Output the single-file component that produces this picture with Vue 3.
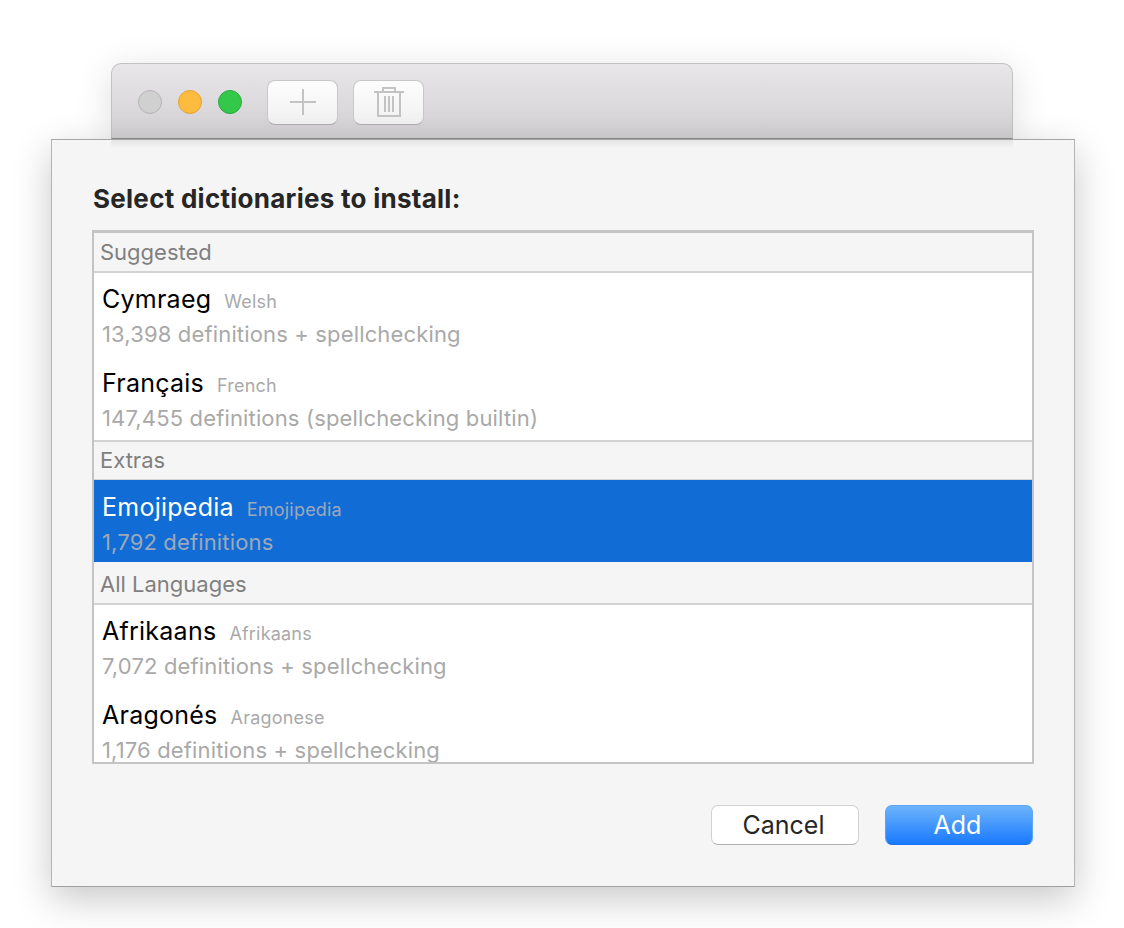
<script setup>
const groups = [
  { title: 'Suggested', kind: 'firstgroup', items: [
    { name: 'Cymraeg', en: 'Welsh', info: '13,398 definitions + spellchecking' },
    { name: 'Français', en: 'French', info: '147,455 definitions (spellchecking builtin)' },
  ]},
  { title: 'Extras', kind: 'midgroup', items: [
    { name: 'Emojipedia', en: 'Emojipedia', info: '1,792 definitions', selected: true },
  ]},
  { title: 'All Languages', kind: 'lastgroup', items: [
    { name: 'Afrikaans', en: 'Afrikaans', info: '7,072 definitions + spellchecking' },
    { name: 'Aragonés', en: 'Aragonese', info: '1,176 definitions + spellchecking' },
  ]},
]
</script>

<template>
  <div class="stage">
    <div class="back">
      <span class="light grey"></span>
      <span class="light yellow"></span>
      <span class="light green"></span>
      <button class="tool first" aria-label="Add">
        <svg width="26" height="26" viewBox="0 0 26 26"><path d="M0 13H26M13 0V26" stroke="#c4c3c4" stroke-width="2" fill="none"/></svg>
      </button>
      <button class="tool" aria-label="Delete">
        <svg width="30" height="30" viewBox="0 0 30 30" fill="none" stroke="#c4c3c4" stroke-width="2"><path d="M0 5H30M9 5V1H21V5M4 5V29H26V5"/><path d="M11 9V25M15 9V25M19 9V25"/></svg>
      </button>
    </div>
    <div class="sheet">
      <h1 class="heading">Select dictionaries to install:</h1>
      <div class="list">
        <section v-for="g in groups" :key="g.title">
          <div class="group" :class="g.kind">{{ g.title }}</div>
          <div v-for="it in g.items" :key="it.name" class="row" :class="{ selected: it.selected }">
            <div class="line"><span class="name">{{ it.name }}</span><span class="en">{{ it.en }}</span></div>
            <div class="info">{{ it.info }}</div>
          </div>
        </section>
      </div>
      <div class="actions">
        <button class="btn cancel">Cancel</button>
        <button class="btn add">Add</button>
      </div>
    </div>
  </div>
</template>

<style>
html, body { background: #fff; margin: 0; }
</style>

<style scoped>
.stage {
  width: 1124px;
  height: 928px;
  box-sizing: border-box;
  padding: 63px 49px 0 51px;
  font-family: Inter, "Noto Sans", sans-serif;
  overflow: hidden;
  background: #fff;
}
.back {
  width: 902px;
  height: 76px;
  margin-left: 60px;
  box-sizing: border-box;
  border: 1px solid #c3c2c3;
  border-bottom: 1px solid #8f8e8f;
  border-radius: 10px 10px 0 0;
  background: linear-gradient(#e8e6e8, #d2d0d3);
  box-shadow: 0 6px 36px rgba(0,0,0,.13);
  display: flex;
  align-items: center;
  padding: 2px 0 0 26px;
}
.light {
  width: 24px;
  height: 24px;
  box-sizing: border-box;
  border-radius: 50%;
  margin-right: 16px;
  border: 1px solid;
}
.grey { background: #d0d0d0; border-color: #b5b5b5; }
.yellow { background: #fdbc40; border-color: #e3a32f; }
.green { background: #34c84a; border-color: #2aaa3c; }
.tool {
  width: 71px;
  height: 45px;
  padding: 0;
  margin: 0 15px 0 0;
  box-sizing: border-box;
  border: 1px solid #c9c8c9;
  border-bottom-color: #b0afb0;
  border-radius: 8px;
  background: linear-gradient(#fdfdfd, #f1f1f1);
  display: flex;
  align-items: center;
  justify-content: center;
}
.tool.first { margin-left: 9px; }
.sheet {
  position: relative;
  width: 1024px;
  height: 748px;
  box-sizing: border-box;
  background: #f5f5f5;
  border: 1px solid #b4b4b4;
  border-top-color: #a5a5a5;
  border-bottom-color: #a0a0a0;
  box-shadow: 0 12px 36px rgba(0,0,0,.22);
  padding: 0 40px;
}
.sheet::before {
  content: "";
  position: absolute;
  top: 0;
  left: 59px;
  right: 61px;
  height: 8px;
  background: linear-gradient(rgba(0,0,0,.07), rgba(0,0,0,0));
}
.heading {
  margin: 0;
  padding-left: 1px;
  height: 90px;
  box-sizing: border-box;
  padding-top: 44px;
  font-size: 26px;
  letter-spacing: .27px;
  line-height: 30px;
  font-weight: 700;
  color: #262626;
}
.list {
  height: 534px;
  box-sizing: border-box;
  border: 2px solid #c4c4c4;
  border-top-width: 3px;
  background: #fff;
  overflow: hidden;
}
.group {
  box-sizing: border-box;
  padding-left: 6px;
  background: #f5f5f5;
  border-bottom: 2px solid #d2d2d2;
  font-size: 22px;
  color: #808080;
}
.firstgroup { height: 40px; line-height: 39px; }
.midgroup {
  height: 40px;
  margin-top: -1px;
  line-height: 37px;
  border-top: 2px solid #d2d2d2;
  border-bottom-width: 1px;
}
.lastgroup { height: 43px; line-height: 44px; }
.row {
  height: 84px;
  box-sizing: border-box;
  padding: 9px 8px 0 8px;
}
.line {
  display: flex;
  align-items: baseline;
  height: 38px;
  line-height: 34px;
}
.name {
  font-size: 25px;
  letter-spacing: .25px;
  color: #000;
  margin-right: 13px;
}
.en {
  font-size: 18px;
  letter-spacing: .2px;
  color: #a9a9a9;
}
.info {
  font-size: 22px;
  letter-spacing: .15px;
  line-height: 28px;
  color: #a9a9a9;
}
.selected {
  background: #116cd6;
  height: 82px;
}
.selected .line { height: 39px; line-height: 36px; }
.selected .name { color: #fff; }
.selected .en, .selected .info { color: #9fa8b8; }
.actions {
  display: flex;
  justify-content: flex-end;
  gap: 26px;
  margin-top: 41px;
  padding-right: 1px;
}
.btn {
  width: 148px;
  height: 40px;
  box-sizing: border-box;
  padding: 0 3px 0 0;
  border-radius: 7px;
  font-family: inherit;
  font-size: 25px;
  line-height: 38px;
}
.cancel {
  background: #fff;
  color: #262626;
  border: 1px solid #d2d2d2;
  border-bottom-color: #b0b0b0;
}
.add {
  background: linear-gradient(#6cb3fa, #1a7aff);
  color: #fff;
  border: 1px solid #5aa5f8;
  border-bottom-color: #1a72ee;
}
</style>
